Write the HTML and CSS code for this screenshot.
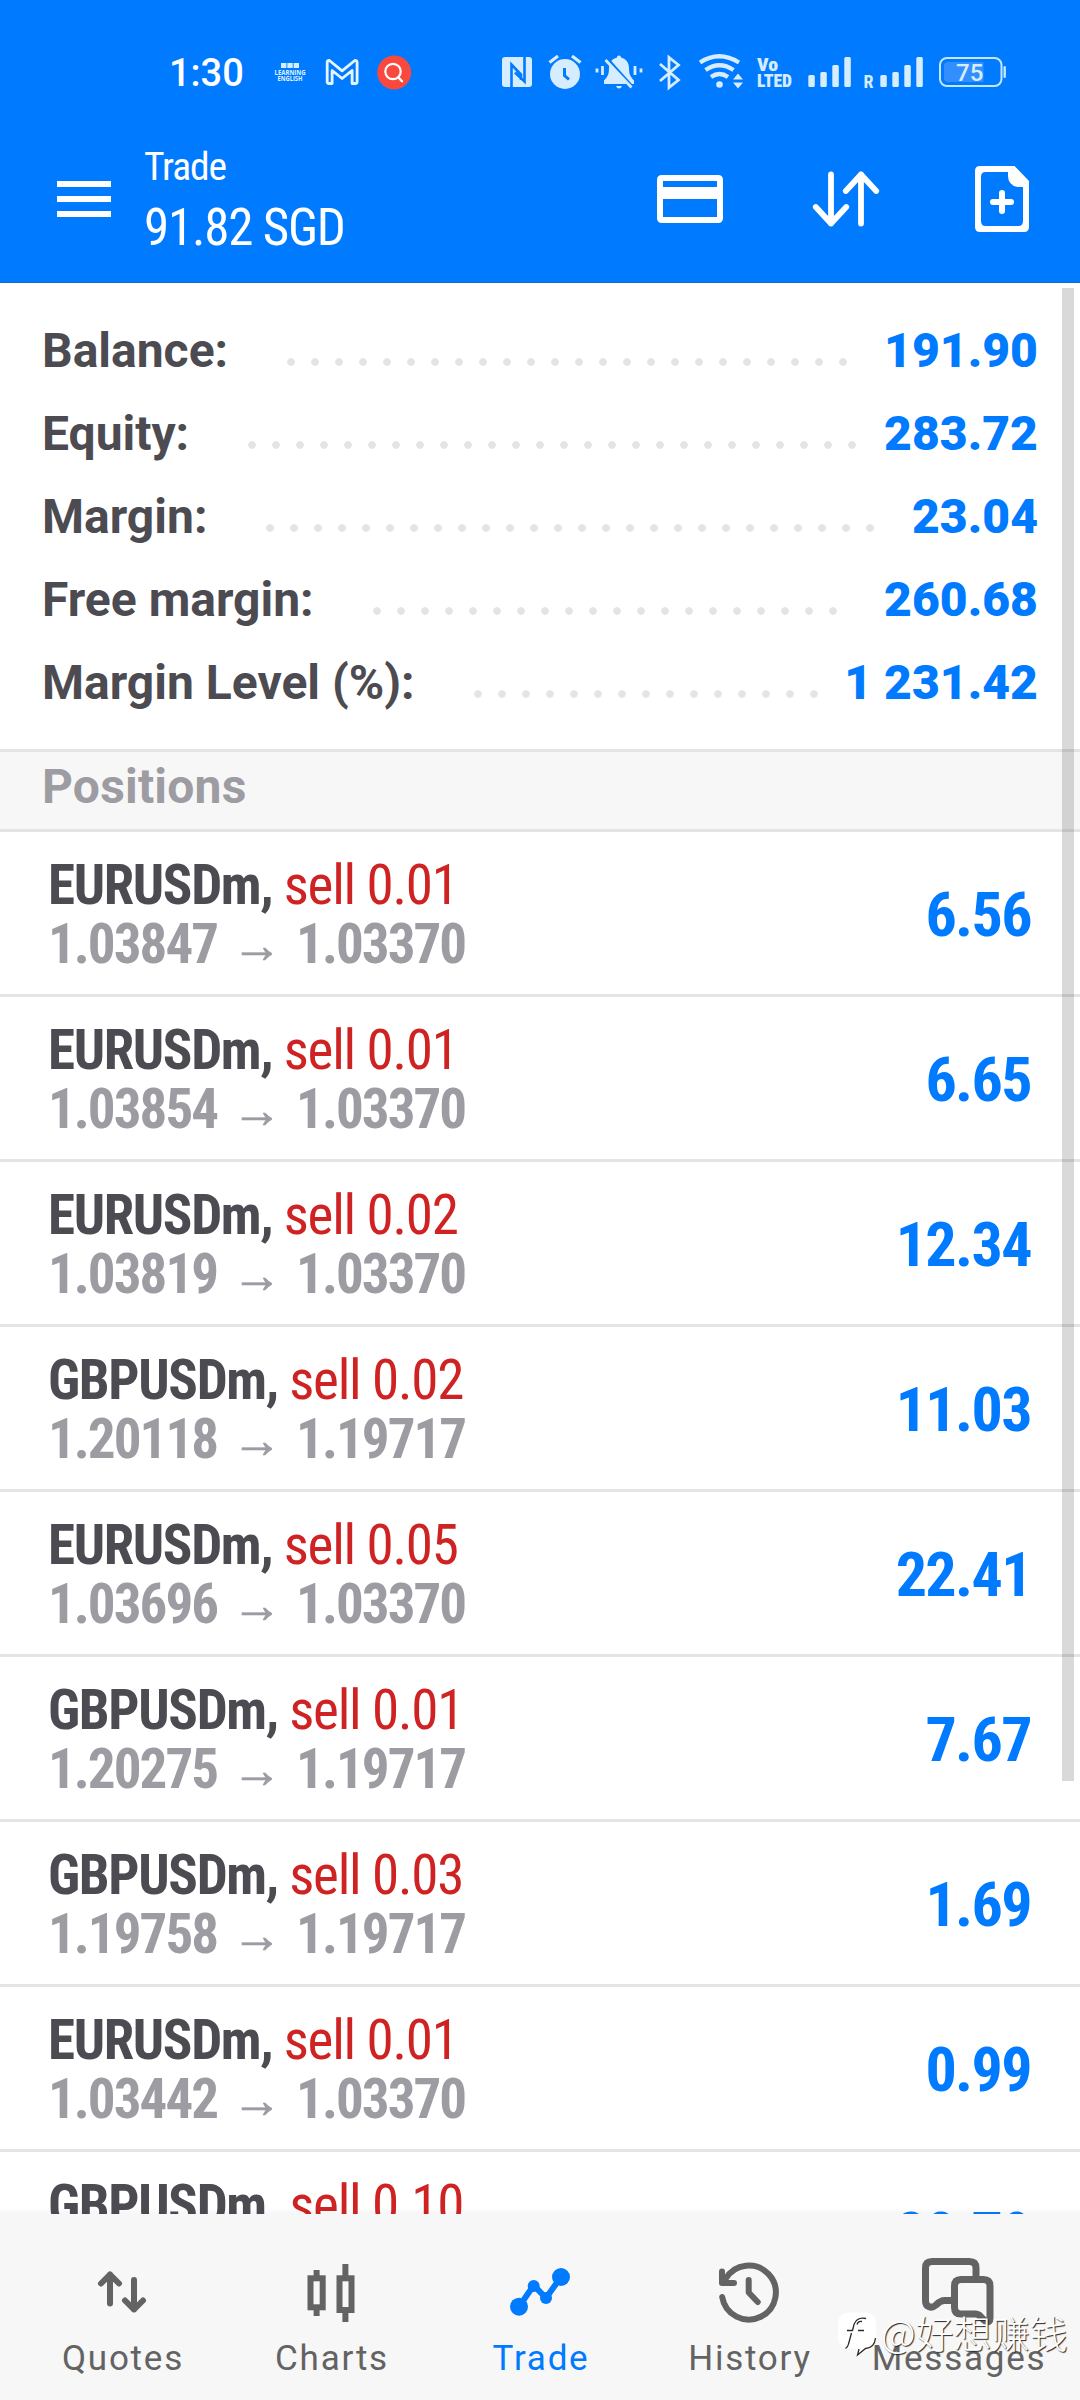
FILE: index.html
```html
<!DOCTYPE html>
<html lang="en">
<head>
<meta charset="utf-8">
<title>Trade</title>
<link rel="stylesheet" href="styles.css">
</head>
<body>
<div class="screen">
  <header class="header">
    <div class="status">
      <span class="time">1:30</span>
      <svg class="status-icon" width="40" height="36" viewBox="272 55 40 36">
        <g fill="#d6ecff"><rect x="281" y="63" width="5.4" height="5"/><rect x="287.3" y="63" width="5.4" height="5"/><rect x="293.6" y="63" width="5.4" height="5"/></g>
        <g class="tiny"><text x="274.5" y="74.8" textLength="31" lengthAdjust="spacingAndGlyphs">LEARNING</text><text x="277.5" y="81" textLength="25" lengthAdjust="spacingAndGlyphs">ENGLISH</text></g>
      </svg>
      <svg class="status-icon" width="40" height="36" viewBox="324 55 40 36">
        <path d="M327.2 62.5q0-2.2 2.2-2l12.7 10.3 12.7-10.3q2.300-.2 2.300 2v19.300q0 1.700-1.700 1.700h-3.300V70.500l-10 8-10-8v13h-3.200q-1.700 0-1.700-1.700z" fill="none" stroke="#e6f6ff" stroke-width="2.800" stroke-linejoin="round"/>
      </svg>
      <svg class="status-icon" width="36" height="36" viewBox="376 55 36 36">
        <circle cx="394.200" cy="72.500" r="17" fill="#f9493f"/>
        <circle cx="393" cy="71.500" r="7.700" fill="none" stroke="#fff" stroke-width="2.200"/>
        <path d="M398.500 77.500l3.500 3.800" stroke="#fff" stroke-width="2.400" stroke-linecap="round"/>
      </svg>
      <svg class="status-icon first-right" width="34" height="36" viewBox="500 55 34 36">
        <rect x="502" y="57" width="30" height="30" rx="3" fill="#d6ecff"/>
        <path d="M511.500 87.500V64.500l9.500 10v5.500M524.500 56.500V81.500l-9.500-9" fill="none" stroke="#007aff" stroke-width="2.600"/>
      </svg>
      <svg class="status-icon" width="36" height="36" viewBox="546 55 36 36">
        <circle cx="565" cy="74" r="15" fill="#d6ecff"/>
        <path d="M549.500 62.500l8.500-6.500M580.500 62.500l-8.500-6.500" stroke="#d6ecff" stroke-width="3.200"/>
        <path d="M564.500 68v7.500l4.500 4" fill="none" stroke="#007aff" stroke-width="3"/>
      </svg>
      <svg class="status-icon" width="52" height="36" viewBox="594 55 52 36">
        <path d="M619 55.500c1.500 0 2 1 2 2 5.500 1.500 8 5.500 8 10.500 0 6 1 8 5 12.500v3.500H604v-3.500c4-4 5-6.500 5-12.500 0-5 2.500-9 8-10.500 0-1 .5-2 2-2zM616 86h6q-1 2.500-3 2.500t-3-2.500z" fill="#d6ecff"/>
        <path d="M607.500 59l26 29" stroke="#007aff" stroke-width="3"/>
        <path d="M605.500 60l26 27.500M602.500 66v9M597 68.500v4M635 66v9M641 68.500v4" stroke="#d6ecff" stroke-width="2.800"/>
      </svg>
      <svg class="status-icon" width="28" height="36" viewBox="658 55 28 36">
        <path d="M660 64l18.500 16-9.500 7.500v-30l9.500 7.500L660 81" fill="none" stroke="#d6ecff" stroke-width="2.800"/>
      </svg>
      <svg class="status-icon" width="46" height="36" viewBox="698 55 46 36">
        <g fill="none" stroke="#d6ecff" stroke-width="4.200"><path d="M700 62.500q19-12.500 39 0"/><path d="M705.500 70q14-9.500 28 0"/><path d="M711 77q8.500-6 17 0"/></g>
        <circle cx="719.500" cy="84.500" r="3.300" fill="#d6ecff"/>
        <path d="M733 79.500l5-6 5 6zM733 82.500l5 6 5-6z" fill="#d6ecff"/>
      </svg>
      <svg class="status-icon" width="40" height="36" viewBox="756 55 40 36">
        <g class="volte"><text x="757" y="71" textLength="21" lengthAdjust="spacingAndGlyphs">Vo</text><text x="757" y="87" textLength="35" lengthAdjust="spacingAndGlyphs">LTED</text></g>
      </svg>
      <svg class="status-icon" width="44" height="36" viewBox="808 55 44 36" fill="#d6ecff">
        <rect x="808.300" y="75" width="6.500" height="12" rx="1.500"/><rect x="820.300" y="72" width="6.500" height="15" rx="1.500"/><rect x="832.300" y="65" width="6.500" height="22" rx="1.500"/><rect x="844.300" y="57" width="6.500" height="30" rx="1.500"/>
      </svg>
      <svg class="status-icon" width="60" height="36" viewBox="864 55 60 36" fill="#d6ecff">
        <text class="roam" x="863.500" y="88">R</text>
        <rect x="880.300" y="75" width="6.500" height="12" rx="1.500"/><rect x="892.300" y="72" width="6.500" height="15" rx="1.500"/><rect x="904.300" y="65" width="6.500" height="22" rx="1.500"/><rect x="916.300" y="57" width="6.500" height="30" rx="1.500"/>
      </svg>
      <svg class="status-icon" width="72" height="36" viewBox="936 55 72 36">
        <rect x="940" y="58" width="61.500" height="28" rx="7" fill="none" stroke="#c4e6ff" stroke-width="2"/>
        <path d="M948 62h35.500v20H948q-4 0-4-4V66q0-4 4-4z" fill="#338fff"/>
        <rect x="1003.500" y="66" width="2.400" height="12" rx="1.200" fill="#c4e6ff"/>
        <text class="charge" x="956" y="81" textLength="27.500">75</text>
      </svg>
    </div>
    <div class="toolbar">
      <div class="menu"><i></i><i></i><i></i></div>
      <div class="titles">
        <div class="title">Trade</div>
        <div class="profit">91.82 SGD</div>
      </div>
      <div class="actions">
        <svg width="68" height="68" viewBox="656 165 68 68"><path fill="#fff" fill-rule="evenodd" d="M662 175h56q5 0 5 5v38q0 5-5 5h-56q-5 0-5-5v-38q0-5 5-5zM663 181v6h54v-6zM663 199v18h54v-18z"/></svg>
        <svg width="68" height="68" viewBox="812 165 68 68"><path d="M831 174.500v49M815.800 207l15.200 16.500 15.200-16.500M861 223.500v-49M845.800 191l15.200-16.500 15.200 16.500" fill="none" stroke="#fff" stroke-width="5.800" stroke-linecap="round" stroke-linejoin="round"/></svg>
        <svg width="68" height="68" viewBox="968 165 68 68"><path fill="#fff" fill-rule="evenodd" d="M980 166h34.500l14.500 15v46q0 5-5 5h-44q-5 0-5-5v-56q0-5 5-5zM985.500 172q-4.500 0-4.500 5v44q0 5 4.500 5h33q4.500 0 4.500-5v-34h-5.500q-9.500-2-9.500-11v-4z"/><path d="M1002 193v18M993 202h18" stroke="#fff" stroke-width="6" stroke-linecap="round"/></svg>
      </div>
    </div>
  </header>

  <main class="content">
    <section class="summary">
      <div class="sum-row"><span>Balance:</span><i class="dots" style="--n:24"></i><b>191.90</b></div>
      <div class="sum-row"><span>Equity:</span><i class="dots" style="--n:26"></i><b>283.72</b></div>
      <div class="sum-row"><span>Margin:</span><i class="dots" style="--n:26"></i><b>23.04</b></div>
      <div class="sum-row"><span>Free margin:</span><i class="dots" style="--n:20"></i><b>260.68</b></div>
      <div class="sum-row"><span>Margin Level (%):</span><i class="dots" style="--n:15"></i><b>1 231.42</b></div>
    </section>
    <h2 class="section">Positions</h2>
    <ul class="positions">
      <li><div><p class="deal">EURUSDm, <span>sell 0.01</span></p><p class="price">1.03847<i>→</i>1.03370</p></div><b>6.56</b></li>
      <li><div><p class="deal">EURUSDm, <span>sell 0.01</span></p><p class="price">1.03854<i>→</i>1.03370</p></div><b>6.65</b></li>
      <li><div><p class="deal">EURUSDm, <span>sell 0.02</span></p><p class="price">1.03819<i>→</i>1.03370</p></div><b>12.34</b></li>
      <li><div><p class="deal">GBPUSDm, <span>sell 0.02</span></p><p class="price">1.20118<i>→</i>1.19717</p></div><b>11.03</b></li>
      <li><div><p class="deal">EURUSDm, <span>sell 0.05</span></p><p class="price">1.03696<i>→</i>1.03370</p></div><b>22.41</b></li>
      <li><div><p class="deal">GBPUSDm, <span>sell 0.01</span></p><p class="price">1.20275<i>→</i>1.19717</p></div><b>7.67</b></li>
      <li><div><p class="deal">GBPUSDm, <span>sell 0.03</span></p><p class="price">1.19758<i>→</i>1.19717</p></div><b>1.69</b></li>
      <li><div><p class="deal">EURUSDm, <span>sell 0.01</span></p><p class="price">1.03442<i>→</i>1.03370</p></div><b>0.99</b></li>
      <li><div><p class="deal">GBPUSDm, <span>sell 0.10</span></p></div><b>38.79</b></li>
    </ul>
    <div class="scrollbar"></div>
  </main>

  <nav class="tabs">
    <a class="tab"><svg width="84" height="70" viewBox="80 2256 84 70"><path d="M110 2303.500V2274.500M101 2283.500l9-9 9 9M134 2280v29.500M125 2300.500l9 9 9-9"/></svg><span>Quotes</span></a>
    <a class="tab"><svg width="84" height="70" viewBox="289 2256 84 70"><g class="square"><rect x="310.500" y="2278.300" width="12.200" height="29"/><path d="M316.600 2270v6M316.600 2310v6"/><rect x="339.500" y="2278.300" width="12" height="31.700"/><path d="M345.400 2264v12M345.400 2312v10"/></g></svg><span>Charts</span></a>
    <a class="tab active"><svg width="84" height="70" viewBox="498 2256 84 70"><path d="M519 2306.700l14.700-21.400 12.300 12.700 15-21"/><g class="solid"><circle cx="519" cy="2306.700" r="9"/><circle cx="533.700" cy="2286" r="6"/><circle cx="546" cy="2298" r="6"/><circle cx="561" cy="2277" r="9"/></g></svg><span>Trade</span></a>
    <a class="tab"><svg width="84" height="70" viewBox="707 2256 84 70"><path d="M722.200 2297a27 27 0 1 0 3.300-18M722 2271.500v11.500h12M748.700 2280v12.500l9 9.500"/></svg><span>History</span></a>
    <a class="tab"><svg class="chat" width="84" height="70" viewBox="916 2256 84 70"><path d="M953 2300.500h-8.500c-4 0-6 2-8.500 4.500-4.500 4-10.500 2-10.500-4V2268q0-6.500 6.500-6.500h37.500q6.500 0 6.500 6.500v9M961 2279.500h22.500q6.500 0 6.500 6.500v32q0 5-4 3.500-3-2-5.500-5-2-2.500-5.500-2.500h-14q-6.500 0-6.500-6.500V2286q0-6.500 6.500-6.500z"/></svg><span>Messages</span></a>
  </nav>

  <div class="watermark">
    <svg width="42" height="48" viewBox="836 2318 42 48">
      <path d="M850 2320.500h14q12 0 12 12v12q0 12-11 12l-8 8-1-8h-6q-12 0-12-12v-12q0-12 12-12z" fill="#fff"/>
      <path d="M866 2326.500q-9-2-12 6l-1.500 6h-5.500M851.500 2341l-3 11q-.5 3-3 4.500M862 2329.500q-4-1-5 3M858 2338.500h6M875.500 2346q-1 10-10 10.500l-8 6.500 1.500-6" fill="none" stroke="#2c2c2c" stroke-width="1.300"/>
    </svg>
    <span>@好想赚钱</span>
  </div>
</div>
</body>
</html>
```
FILE: styles.css
```css
* { box-sizing: border-box; margin: 0; padding: 0; }
body { background: #fff; font-family: Roboto, sans-serif; }
svg { display: block; flex: none; }

.screen {
  position: relative;
  display: flex;
  flex-direction: column;
  width: 1080px;
  height: 2400px;
  overflow: hidden;
}

/* Blue header: system status + toolbar */
.header { flex: none; height: 283px; background: #007aff; border-bottom: 1px solid #1a68bd; }
.status {
  display: flex;
  align-items: center;
  gap: 12px;
  height: 115px;
  padding: 31px 72px 0 169px;
}
.time { width: 91px; color: #fff; font-size: 38px; font-weight: 500; line-height: 44px; }
.first-right { margin-left: auto; }
.status-icon { overflow: visible; }
.tiny { fill: #e2f4ff; font: 700 7px "Open Sans", sans-serif; }
.volte { fill: #d6ecff; font: 900 19px "Roboto Condensed", Roboto, sans-serif; }
.roam { font: 700 18px "Roboto Condensed", Roboto, sans-serif; }
.charge { fill: #d6ecff; font: 500 24px Roboto, sans-serif; }

.toolbar { display: flex; align-items: center; height: 168px; padding: 0 44px 0 57px; }
.menu { display: flex; flex-direction: column; gap: 9px; width: 54px; }
.menu i { height: 6px; background: #fff; }
.titles {
  margin: 8px 0 0 33px;
  color: #fff;
  font-family: "Roboto Condensed", Roboto, sans-serif;
  white-space: nowrap;
}
.title { font-size: 39.5px; line-height: 50px; letter-spacing: -1.1px; }
.profit { font-size: 51px; line-height: 72px; letter-spacing: -1.2px; }
.actions { display: flex; gap: 88px; margin-left: auto; }

/* Account summary */
.content { position: relative; flex: 1; min-height: 0; overflow: hidden; }
.content::after {
  content: "";
  position: absolute;
  inset: auto 0 0;
  height: 7px;
  background: linear-gradient(rgba(0, 0, 0, 0), rgba(0, 0, 0, .035));
}
.summary { padding: 26px 42px 25px; }
.sum-row {
  display: flex;
  height: 83px;
  color: #4c4b51;
  font-size: 48px;
  font-weight: 700;
  line-height: 83px;
  white-space: nowrap;
}
.sum-row b { margin-left: auto; color: #007aff; letter-spacing: .05px; }
.dots {
  width: calc(var(--n) * 24px);
  height: 24px;
  margin: 41px 0 0 51px;
  background: radial-gradient(circle, #e4e4e4 3.4px, transparent 4.2px) 0 0 / 24px 24px;
}

.section {
  height: 83px;
  padding-left: 42px;
  border: solid #e4e4e4;
  border-width: 3px 0;
  background: #f7f7f7;
  color: #9c9ca2;
  font-size: 48px;
  line-height: 69px;
  letter-spacing: .2px;
}

/* Open positions */
.positions { list-style: none; font-family: "Roboto Condensed", Roboto, sans-serif; }
.positions li {
  display: flex;
  justify-content: space-between;
  height: 165px;
  padding: 0 49px 0 48px;
  border-bottom: 3px solid #e4e4e4;
  white-space: nowrap;
}
.positions li > div { padding-top: 24px; font-size: 55px; line-height: 59px; }
.deal { color: #4c4b51; font-weight: 700; letter-spacing: -1.35px; }
.deal span { color: #cf2323; font-weight: 400; letter-spacing: -1.2px; }
.price { display: flex; color: #9c9ca2; font-weight: 700; letter-spacing: -1.95px; }
.price i {
  display: flex;
  justify-content: center;
  width: 79px;
  padding-left: 1px;
  font: 400 50px/60px "Liberation Sans", sans-serif;
  letter-spacing: 0;
  -webkit-text-stroke: .8px #9c9ca2;
}
.positions b { color: #007aff; font-size: 62px; line-height: 165px; letter-spacing: -1.6px; }
.scrollbar {
  position: absolute;
  top: 5px;
  right: 6px;
  width: 12px;
  height: 1493px;
  background: rgba(0, 0, 0, .15);
}

/* Bottom tabs */
.tabs {
  display: grid;
  grid-template-columns: repeat(5, 209px);
  flex: none;
  justify-content: center;
  height: 186px;
  padding-top: 42px;
  background: #f7f7f7;
}
.tab { display: flex; flex-direction: column; align-items: center; gap: 7px; color: #636363; }
.tab span { padding-left: 2px; font-size: 35px; line-height: 51px; letter-spacing: 1.75px; }
.tab svg { fill: none; stroke: currentColor; stroke-width: 6px; stroke-linecap: round; stroke-linejoin: round; }
.tab .square { stroke-linecap: butt; stroke-linejoin: miter; }
.tab .solid { fill: currentColor; stroke: none; }
.tab .chat { stroke-width: 7px; }
.active { color: #007aff; }

.watermark {
  position: absolute;
  left: 836px;
  top: 2308px;
  display: flex;
  align-items: center;
  gap: 3px;
  color: #fff;
  font: 300 38px/54px "Noto Sans CJK SC", sans-serif;
  text-shadow: 1px 1px 1px #222;
  white-space: nowrap;
}
.watermark span { margin-top: -3px; }
```
